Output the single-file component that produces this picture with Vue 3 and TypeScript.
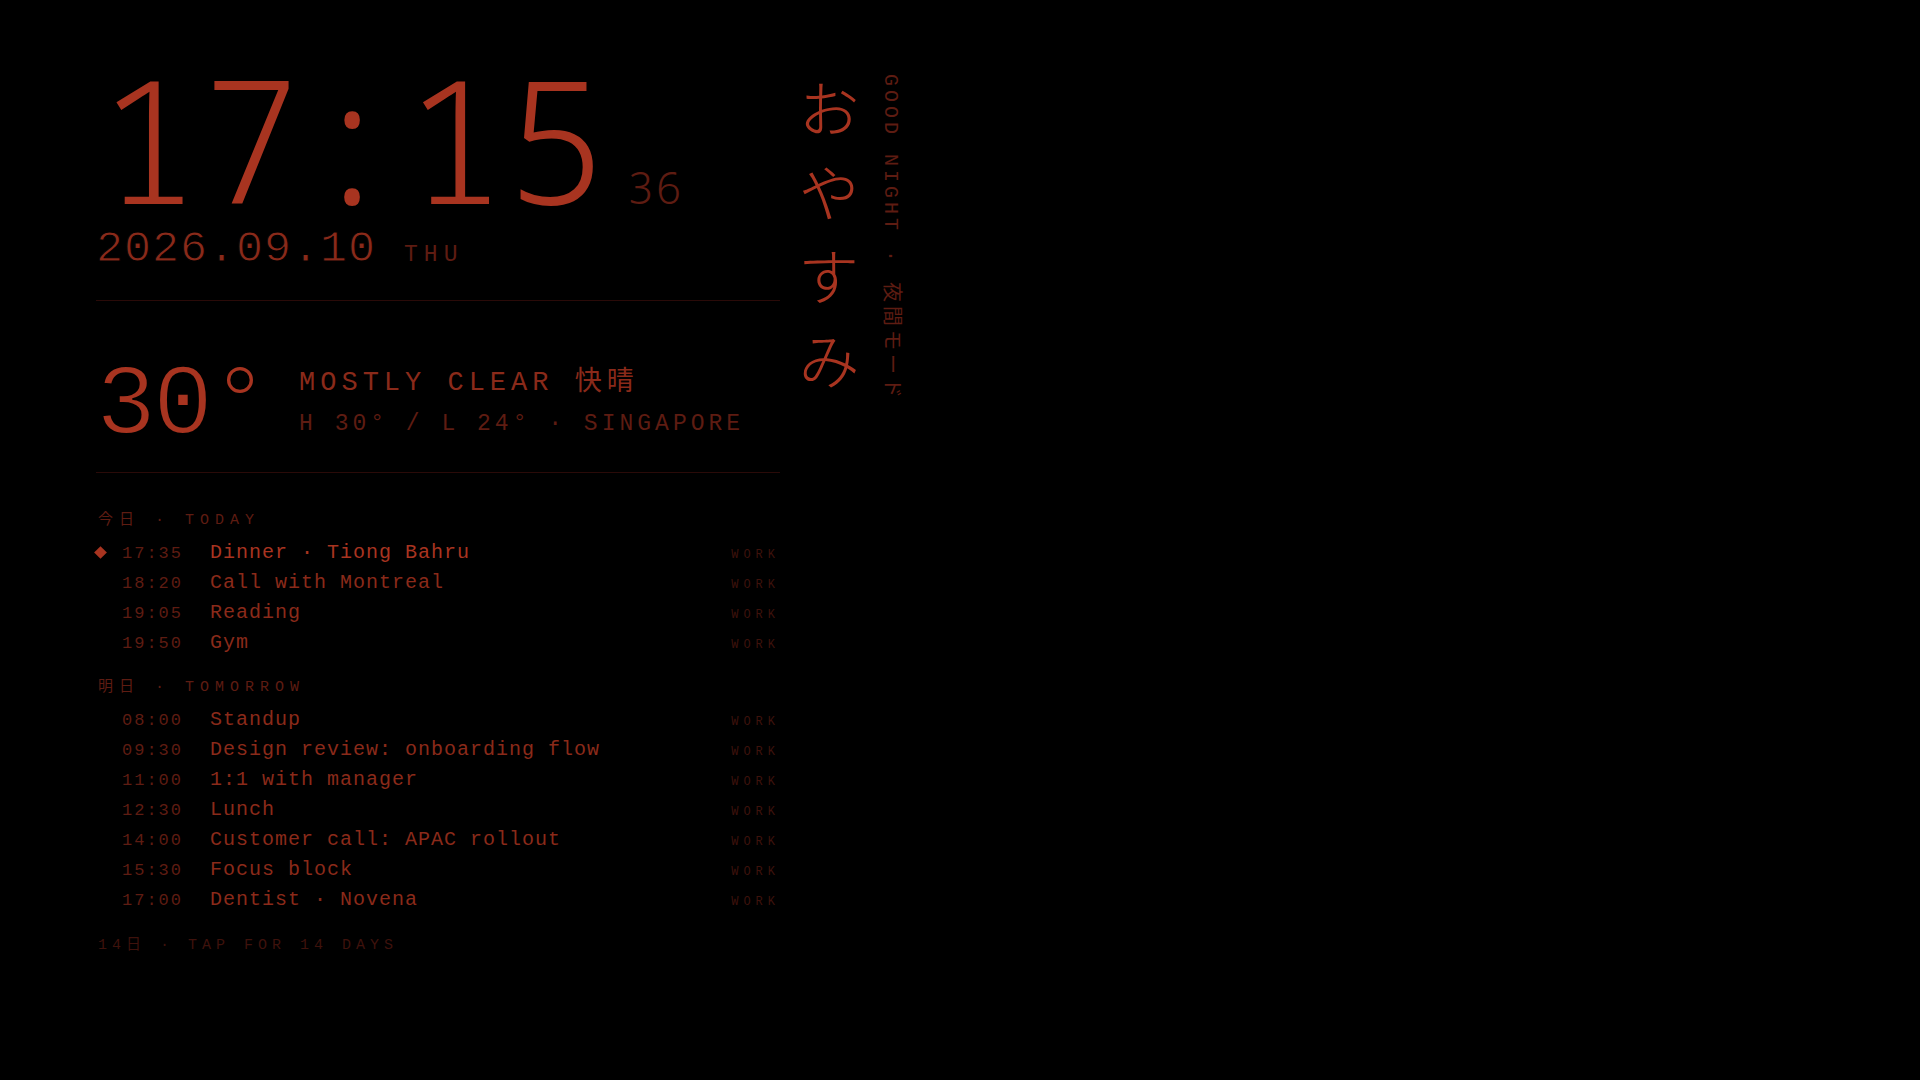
<script setup lang="ts">
interface Entry {
  time: string
  title: string
  tag: string
  next?: boolean
}

interface Day {
  id: string
  label: string
  entries: Entry[]
}

const days: Day[] = [
  {
    id: 'today',
    label: '今日 · TODAY',
    entries: [
      { time: '17:35', title: 'Dinner · Tiong Bahru', tag: 'WORK', next: true },
      { time: '18:20', title: 'Call with Montreal', tag: 'WORK' },
      { time: '19:05', title: 'Reading', tag: 'WORK' },
      { time: '19:50', title: 'Gym', tag: 'WORK' },
    ],
  },
  {
    id: 'tomorrow',
    label: '明日 · TOMORROW',
    entries: [
      { time: '08:00', title: 'Standup', tag: 'WORK' },
      { time: '09:30', title: 'Design review: onboarding flow', tag: 'WORK' },
      { time: '11:00', title: '1:1 with manager', tag: 'WORK' },
      { time: '12:30', title: 'Lunch', tag: 'WORK' },
      { time: '14:00', title: 'Customer call: APAC rollout', tag: 'WORK' },
      { time: '15:30', title: 'Focus block', tag: 'WORK' },
      { time: '17:00', title: 'Dentist · Novena', tag: 'WORK' },
    ],
  },
]
</script>

<template>
  <main class="night">
    <div class="board">
      <header class="clock">
        <div class="clock-line">
          <time class="clock-time">17:15</time>
          <span class="clock-seconds">36</span>
        </div>
        <div class="date-line">
          <time class="date" datetime="2026-09-10">2026.09.10</time>
          <span class="weekday">THU</span>
        </div>
      </header>

      <section class="weather">
        <div class="temperature">30°</div>
        <div class="conditions">
          <p class="summary">MOSTLY CLEAR 快晴</p>
          <p class="range">H 30° / L 24° · SINGAPORE</p>
        </div>
      </section>

      <section v-for="day in days" :key="day.id" class="day">
        <h2 class="day-label">{{ day.label }}</h2>
        <ul class="entries">
          <li v-for="entry in day.entries" :key="entry.time" class="entry" :class="{ next: entry.next }">
            <span class="marker"></span>
            <time class="entry-time">{{ entry.time }}</time>
            <span class="entry-title">{{ entry.title }}</span>
            <span class="entry-tag">{{ entry.tag }}</span>
          </li>
        </ul>
      </section>

      <button type="button" class="more">14日 · TAP FOR 14 DAYS</button>
    </div>

    <aside class="greeting">
      <p class="greeting-main">おやすみ</p>
      <p class="greeting-sub">GOOD NIGHT · 夜間モード</p>
    </aside>
  </main>
</template>

<style>
html,
body {
  margin: 0;
  background: #000;
}
</style>

<style scoped>
.night {
  --bright: #a83420;
  --mid: #8a2a1a;
  --dim: #5e1c12;
  --faint: #3e120c;
  --rule: #2a0a08;
  display: flex;
  align-items: flex-start;
  gap: 16px;
  box-sizing: border-box;
  width: 50%;
  min-width: 900px;
  min-height: 100vh;
  padding: 72px 58px 72px 96px;
  background: #000;
  color: var(--bright);
  font-family: "Liberation Mono", "Noto Sans CJK JP", monospace;
  font-weight: 400;
  white-space: nowrap;
}

p,
h2,
ul {
  margin: 0;
  padding: 0;
  font-weight: inherit;
}

.board {
  flex: 1;
}

.clock {
  box-sizing: border-box;
  height: 229px;
  border-bottom: 1px solid var(--rule);
}

.clock-line {
  display: flex;
  align-items: baseline;
  gap: 20px;
  height: 130px;
  font-family: "Noto Sans Mono", "Liberation Mono", monospace;
  font-weight: 300;
  line-height: 130px;
}

.clock-time {
  font-size: 172px;
  font-weight: 350;
  letter-spacing: -1px;
}

.clock-seconds {
  font-size: 44px;
  letter-spacing: 2px;
  color: var(--dim);
}

.date-line {
  display: flex;
  align-items: baseline;
  gap: 28px;
  margin-top: 20px;
  line-height: 56px;
}

/* An outline in the background colour thins the heavy strokes of large text. */
.date {
  font-size: 45px;
  letter-spacing: 1px;
  color: var(--mid);
  -webkit-text-stroke: 1px #000;
}

.weekday {
  font-size: 23px;
  letter-spacing: 6px;
  color: var(--dim);
}

.weather {
  display: flex;
  align-items: center;
  gap: 32px;
  padding: 48px 0 17px;
  border-bottom: 1px solid var(--rule);
}

.temperature {
  padding-top: 10px;
  font-size: 100px;
  letter-spacing: -3px;
  line-height: 96px;
  -webkit-text-stroke: 2px #000;
}

.conditions {
  display: grid;
  gap: 1px;
  padding-top: 3px;
}

.summary {
  font-size: 27px;
  letter-spacing: 5px;
  line-height: 40px;
  color: var(--mid);
}

.range {
  font-size: 23px;
  letter-spacing: 4px;
  line-height: 40px;
  color: var(--dim);
}

.day {
  padding-top: 32px;
}

.day + .day {
  padding-top: 14px;
}

.day-label {
  height: 32px;
  padding-left: 2px;
  font-size: 15px;
  letter-spacing: 6px;
  line-height: 32px;
  color: var(--dim);
}

.entries {
  padding-top: 1px;
  list-style: none;
}

.entry {
  display: grid;
  grid-template-columns: 10px 72px 1fr auto;
  column-gap: 16px;
  align-items: baseline;
  height: 30px;
  line-height: 30px;
}

.marker {
  align-self: center;
  width: 9px;
  height: 9px;
  margin-bottom: 3px;
}

.next .marker {
  background: var(--bright);
  transform: rotate(45deg);
}

.entry-time {
  font-size: 17px;
  letter-spacing: 2px;
  color: var(--dim);
}

.entry-title {
  font-size: 20px;
  letter-spacing: 1px;
  color: var(--mid);
}

.next .entry-title {
  color: var(--bright);
}

.entry-tag {
  font-size: 12px;
  letter-spacing: 5px;
  color: var(--faint);
}

.more {
  margin-top: 15px;
  padding: 0 0 0 2px;
  border: 0;
  background: none;
  color: var(--faint);
  font: inherit;
  font-size: 15px;
  letter-spacing: 5px;
  line-height: 32px;
}

.greeting {
  display: flex;
  gap: 16px;
  padding-top: 2px;
}

.greeting-main,
.greeting-sub {
  writing-mode: vertical-rl;
}

.greeting-main {
  margin-top: 4px;
  font-family: "Noto Sans CJK JP", sans-serif;
  font-size: 62px;
  font-weight: 300;
  letter-spacing: 22px;
  line-height: 66px;
}

.greeting-sub {
  font-size: 20px;
  letter-spacing: 4px;
  line-height: 24px;
  text-orientation: sideways;
  color: var(--dim);
}
</style>
